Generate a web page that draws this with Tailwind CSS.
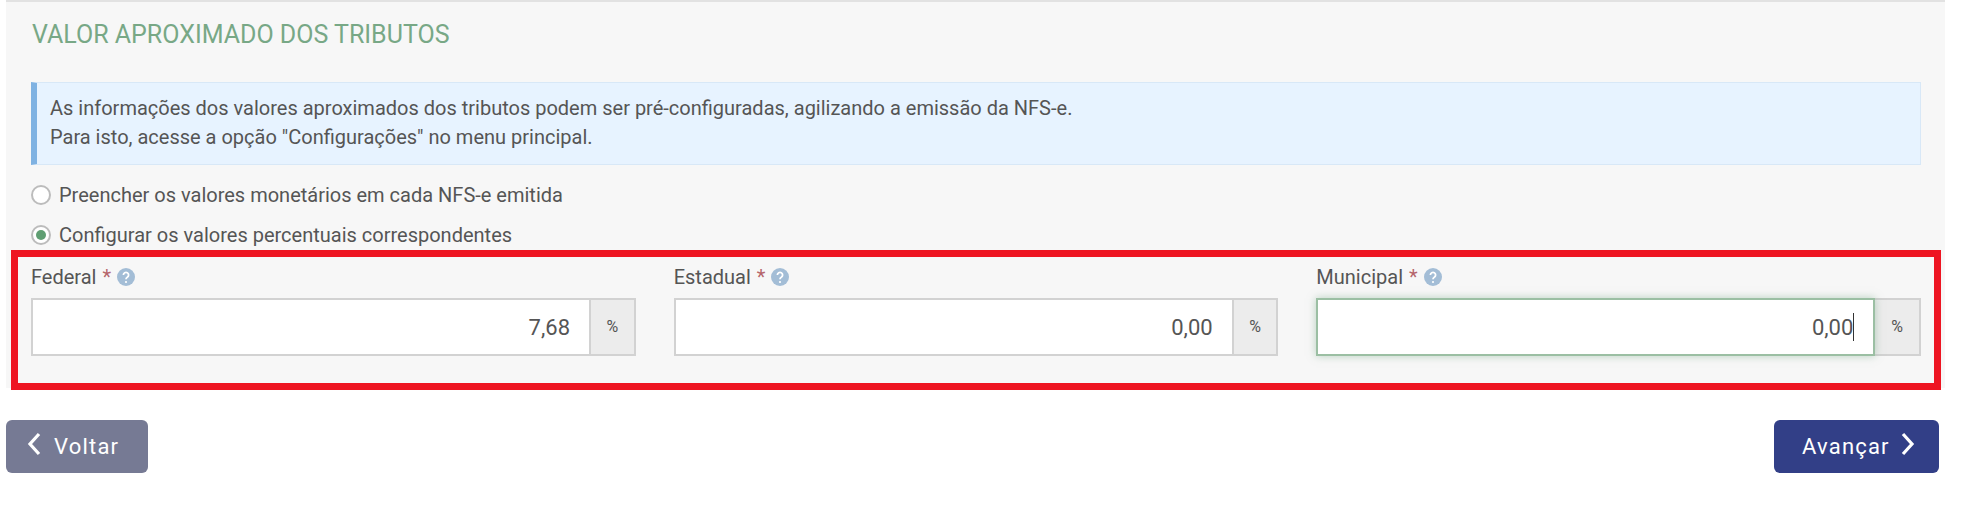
<!DOCTYPE html>
<html lang="pt-BR">

<head>
    <meta charset="UTF-8">
    <title>Valor aproximado dos tributos</title>
    <script src="https://cdn.jsdelivr.net/npm/@tailwindcss/browser@4"></script>
</head>

<body class="bg-white font-['Roboto',sans-serif] text-[#555555] overflow-hidden">
    <main class="w-[1963px] h-[517px]">
        <!-- painel -->
        <section class="ml-[6px] w-[1939px] h-[388px] bg-[#f7f7f7] border-t-2 border-[#e2e2e2]">
            <h2 class="ml-[26px] pt-[18px] h-[80px] text-[25px] leading-[30px] text-[#78a886]">VALOR APROXIMADO DOS TRIBUTOS</h2>

            <div class="ml-[25px] w-[1890px] h-[83px] bg-[#e7f3ff] border border-[#d8e8f7] border-l-[6px] border-l-[#7fb2e2] pl-[13px] pt-[11px] text-[20px] leading-[29px]">
                <p>As informações dos valores aproximados dos tributos podem ser pré-configuradas, agilizando a emissão da NFS-e.</p>
                <p>Para isto, acesse a opção "Configurações" no menu principal.</p>
            </div>

            <!-- opcoes -->
            <div class="ml-[25px] mt-[20px] flex items-center gap-[8px] h-[20px] text-[20px]">
                <span class="w-[20px] h-[20px] rounded-full border-2 border-[#bcbcbc] bg-white"></span>
                <span>Preencher os valores monetários em cada NFS-e emitida</span>
            </div>
            <div class="ml-[25px] mt-[20px] flex items-center gap-[8px] h-[20px] text-[20px]">
                <span class="w-[20px] h-[20px] rounded-full border-2 border-[#bcbcbc] bg-white flex items-center justify-center">
                    <span class="w-[10px] h-[10px] rounded-full bg-[#5f9e72]"></span>
                </span>
                <span>Configurar os valores percentuais correspondentes</span>
            </div>

            <!-- campos, com o destaque vermelho -->
            <div class="ml-[5px] mt-[5px] w-[1930px] h-[140px] border-[7px] border-[#ee1522] pl-[13px] pr-[13px] pt-[8px] grid grid-cols-3 gap-x-[38px] content-start">
                <div>
                    <label class="flex items-center h-[24px] text-[20px]">Federal<span class="ml-[6px] text-[#b5656b]">*</span>
                        <svg class="ml-[6px] w-[18px] h-[18px]" viewBox="0 0 18 18"><circle cx="9" cy="9" r="9" fill="#a3bdd6"/><path d="M6.4 7a2.6 2.6 0 1 1 3.9 2.3c-.9.5-1.3 1-1.3 2" fill="none" stroke="#fff" stroke-width="1.8"/><circle cx="9" cy="14" r="1.1" fill="#fff"/></svg>
                    </label>
                    <div class="mt-[9px] flex h-[58px]">
                        <input value="7,68" class="w-[560px] h-full bg-white border-2 border-[#d2d2d2] text-right pr-[19px] text-[22px] text-[#555555] outline-none">
                        <span class="flex-1 flex items-center justify-center bg-[#ececec] border-2 border-l-0 border-[#d2d2d2] text-[16px]">%</span>
                    </div>
                </div>
                <div>
                    <label class="flex items-center h-[24px] text-[20px]">Estadual<span class="ml-[6px] text-[#b5656b]">*</span>
                        <svg class="ml-[6px] w-[18px] h-[18px]" viewBox="0 0 18 18"><circle cx="9" cy="9" r="9" fill="#a3bdd6"/><path d="M6.4 7a2.6 2.6 0 1 1 3.9 2.3c-.9.5-1.3 1-1.3 2" fill="none" stroke="#fff" stroke-width="1.8"/><circle cx="9" cy="14" r="1.1" fill="#fff"/></svg>
                    </label>
                    <div class="mt-[9px] flex h-[58px]">
                        <input value="0,00" class="w-[560px] h-full bg-white border-2 border-[#d2d2d2] text-right pr-[19px] text-[22px] text-[#555555] outline-none">
                        <span class="flex-1 flex items-center justify-center bg-[#ececec] border-2 border-l-0 border-[#d2d2d2] text-[16px]">%</span>
                    </div>
                </div>
                <div>
                    <label class="flex items-center h-[24px] text-[20px]">Municipal<span class="ml-[6px] text-[#b5656b]">*</span>
                        <svg class="ml-[6px] w-[18px] h-[18px]" viewBox="0 0 18 18"><circle cx="9" cy="9" r="9" fill="#a3bdd6"/><path d="M6.4 7a2.6 2.6 0 1 1 3.9 2.3c-.9.5-1.3 1-1.3 2" fill="none" stroke="#fff" stroke-width="1.8"/><circle cx="9" cy="14" r="1.1" fill="#fff"/></svg>
                    </label>
                    <div class="mt-[9px] flex h-[58px]">
                        <div class="relative z-10 w-[559px] h-full bg-white border-2 border-[#9bbfa3] shadow-[0_0_8px_rgba(120,170,135,0.5)] flex items-center justify-end pr-[19px] text-[22px]">
                            <span>0,00</span><span class="w-px h-[28px] bg-[#333333]"></span>
                        </div>
                        <span class="flex-1 flex items-center justify-center bg-[#ececec] border-2 border-l-0 border-[#d2d2d2] text-[16px]">%</span>
                    </div>
                </div>
            </div>
        </section>

        <!-- navegacao -->
        <div class="ml-[6px] mt-[32px] w-[1933px] flex justify-between">
            <button class="w-[142px] h-[53px] rounded-[6px] bg-[#767a94] text-white text-[22px] tracking-[1.2px] flex items-center pl-[21px] gap-[13px]">
                <svg class="w-[14px] h-[24px] -mt-[5px]" viewBox="0 0 14 24"><path d="M12 2 3 12l9 10" fill="none" stroke="#fff" stroke-width="3.2"/></svg>
                Voltar
            </button>
            <button class="w-[165px] h-[53px] rounded-[6px] bg-[#323f87] text-white text-[22px] tracking-[1.2px] flex items-center pl-[28px] gap-[11px]">
                Avançar
                <svg class="w-[14px] h-[24px] -mt-[5px]" viewBox="0 0 14 24"><path d="m2 2 9 10-9 10" fill="none" stroke="#fff" stroke-width="3.2"/></svg>
            </button>
        </div>
    </main>
</body>

</html>
